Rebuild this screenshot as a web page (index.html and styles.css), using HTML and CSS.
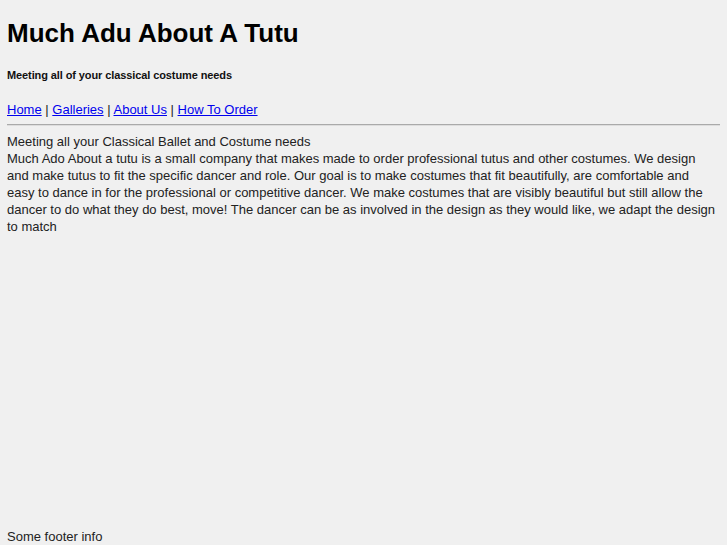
FILE: index.html
```html
<!DOCTYPE html>
<html>
<head>
<meta charset="utf-8">
<link rel="stylesheet" href="styles.css">
</head>
<body>
<div class="header">
  <h1 class="title">Much Adu About A Tutu</h1>
  <h4 class="tagline">Meeting all of your classical costume needs</h4>
</div>
<div class="nav">
  <a href="#">Home</a> | <a href="#">Galleries</a> | <a href="#">About Us</a> | <a href="#">How To Order</a>
</div>
<hr class="rule">
<div class="content">
  <div>Meeting all your Classical Ballet and Costume needs</div>
  <div>Much Ado About a tutu is a small company that makes made to order professional tutus and other costumes. We design and make tutus to fit the specific dancer and role. Our goal is to make costumes that fit beautifully, are comfortable and easy to dance in for the professional or competitive dancer. We make costumes that are visibly beautiful but still allow the dancer to do what they do best, move! The dancer can be as involved in the design as they would like, we adapt the design to match</div>
</div>
<div class="footer">Some footer info</div>
</body>
</html>
```
FILE: styles.css
```css
html { background: #f0f0f0; }
body {
  margin: 0;
  padding: 0 7px;
  font-family: "Liberation Sans", Arial, sans-serif;
  font-size: 13px;
  color: #222;
}
.title {
  margin: 0;
  padding-top: 18px;
  font-size: 26px;
  line-height: 30px;
  color: #000;
}
.tagline {
  margin: 21px 0 0;
  font-size: 11px;
  line-height: 13px;
  color: #111;
  letter-spacing: -0.1px;
}
.nav {
  margin-top: 19px;
  line-height: 17px;
}
.nav a { color: #00e; }
.rule {
  margin: 6px 0 7px;
  border: 0;
  border-top: 1px solid #aaa;
  border-bottom: 1px solid #ddd;
}
.content {
  line-height: 17px;
  min-height: 395px;
  margin-right: 3px;
}
.footer {
  line-height: 17px;
}
```
